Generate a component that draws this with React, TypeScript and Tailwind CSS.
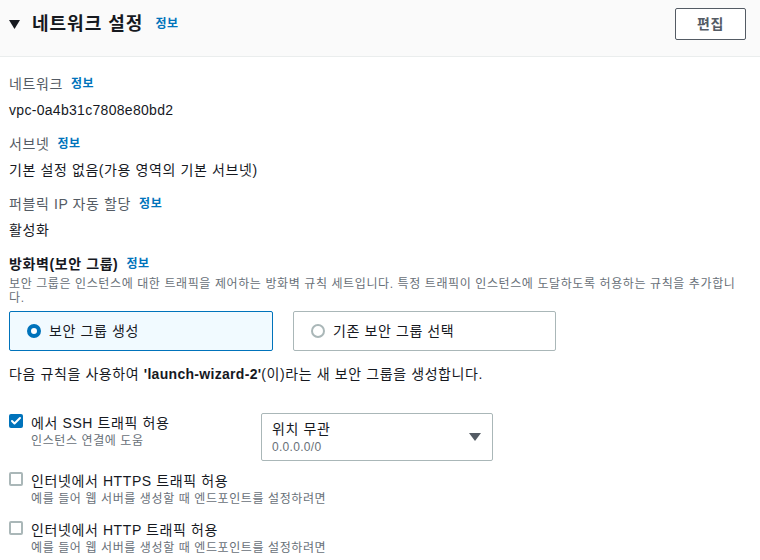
import { Check } from 'lucide-react';

const font = { fontFamily: '"Liberation Sans", "Noto Sans CJK KR", sans-serif' };

function Info() {
  return <span className="ml-2 text-[12px] font-bold text-[#0073bb]">정보</span>;
}

function Field({ label, value, latin }: { label: string; value: string; latin?: boolean }) {
  return (
    <div className="flex flex-col">
      <div className="flex items-center h-5 text-[14px] text-[#545b64]">
        {label}
        <Info />
      </div>
      <div className={`mt-[6px] h-5 leading-5 text-[14px] text-[#16191f] ${latin ? 'tracking-[0.3px]' : ''}`}>
        {value}
      </div>
    </div>
  );
}

function CheckRow({ checked, title, sub }: { checked?: boolean; title: string; sub: string }) {
  return (
    <div className="flex items-start gap-2">
      {checked ? (
        <div className="mt-[1px] w-[14px] h-[14px] rounded-[2px] bg-[#0073bb] flex items-center justify-center">
          <Check className="w-3 h-3 text-white" strokeWidth={4} />
        </div>
      ) : (
        <div className="mt-[1px] w-[14px] h-[14px] rounded-[2px] border-2 border-[#aab7b8] bg-white" />
      )}
      <div className="flex flex-col">
        <div className="text-[14px] leading-5 text-[#16191f]">{title}</div>
        <div className="text-[12px] leading-4 text-[#687078]">{sub}</div>
      </div>
    </div>
  );
}

export default function App() {
  return (
    <div className="w-[760px] h-[560px] bg-white overflow-hidden tracking-[0.6px]" style={font}>
      <div className="h-[57px] bg-[#fafafa] border-b border-[#eaeded] flex items-start pt-[8px] pl-[9px] pr-[14px]">
        <div className="h-[32px] flex items-center">
          <svg width="11" height="9" viewBox="0 0 11 9" className="mr-[12px]">
            <path d="M0 0 H11 L5.5 9 Z" fill="#16191f" />
          </svg>
          <span className="text-[18px] font-bold text-[#16191f] tracking-[1px]">네트워크 설정</span>
          <span className="ml-3 text-[12px] font-bold text-[#0073bb]">정보</span>
        </div>
        <button className="ml-auto w-[71px] h-[32px] rounded-[2px] border border-[#545b64] bg-white text-[14px] font-bold text-[#545b64]">
          편집
        </button>
      </div>

      <div className="pl-[9px] pr-[15px] pt-[17px] flex flex-col">
        <div className="flex flex-col gap-[14px]">
          <Field label="네트워크" value="vpc-0a4b31c7808e80bd2" latin />
          <Field label="서브넷" value="기본 설정 없음(가용 영역의 기본 서브넷)" />
          <Field label="퍼블릭 IP 자동 할당" value="활성화" />
        </div>

        <div className="mt-[14px] flex items-center h-5 text-[14px] font-bold text-[#16191f]">
          방화벽(보안 그룹)
          <Info />
        </div>
        <p className="text-[12px] leading-[14px] text-[#687078] mt-[3px]">
          보안 그룹은 인스턴스에 대한 트래픽을 제어하는 방화벽 규칙 세트입니다. 특정 트래픽이 인스턴스에 도달하도록 허용하는 규칙을 추가합니다.
        </p>

        <div className="mt-[6px] flex gap-[20px]">
          <div className="w-[264px] h-[40px] border border-[#0073bb] bg-[#f1faff] rounded-[2px] flex items-center pl-[17px] gap-[8px]">
            <div className="w-[14px] h-[14px] rounded-full border-[4px] border-[#0073bb] bg-white" />
            <span className="text-[14px] text-[#16191f]">보안 그룹 생성</span>
          </div>
          <div className="w-[263px] h-[40px] border border-[#aab7b8] bg-white rounded-[2px] flex items-center pl-[17px] gap-[8px]">
            <div className="w-[14px] h-[14px] rounded-full border-2 border-[#aab7b8] bg-white" />
            <span className="text-[14px] text-[#16191f]">기존 보안 그룹 선택</span>
          </div>
        </div>

        <div className="mt-[13px] text-[14px] leading-5 text-[#16191f]">
          다음 규칙을 사용하여 <span className="font-bold tracking-[0.3px]">'launch-wizard-2'</span>(이)라는 새 보안 그룹을 생성합니다.
        </div>

        <div className="mt-[29px] flex items-start">
          <div className="w-[252px]">
            <CheckRow checked title="에서 SSH 트래픽 허용" sub="인스턴스 연결에 도움" />
          </div>
          <div className="w-[232px] h-[48px] border border-[#aab7b8] rounded-[2px] flex items-center pl-[10px] pr-[11px]">
            <div className="flex flex-col">
              <span className="text-[14px] leading-5 text-[#16191f]">위치 무관</span>
              <span className="text-[12px] leading-4 text-[#687078] tracking-[0.3px]">0.0.0.0/0</span>
            </div>
            <svg width="12" height="8" viewBox="0 0 12 8" className="ml-auto">
              <path d="M0 0 H12 L6 8 Z" fill="#545b64" />
            </svg>
          </div>
        </div>

        <div className="mt-[10px] flex flex-col gap-[13px]">
          <CheckRow title="인터넷에서 HTTPS 트래픽 허용" sub="예를 들어 웹 서버를 생성할 때 엔드포인트를 설정하려면" />
          <CheckRow title="인터넷에서 HTTP 트래픽 허용" sub="예를 들어 웹 서버를 생성할 때 엔드포인트를 설정하려면" />
        </div>
      </div>
    </div>
  );
}
